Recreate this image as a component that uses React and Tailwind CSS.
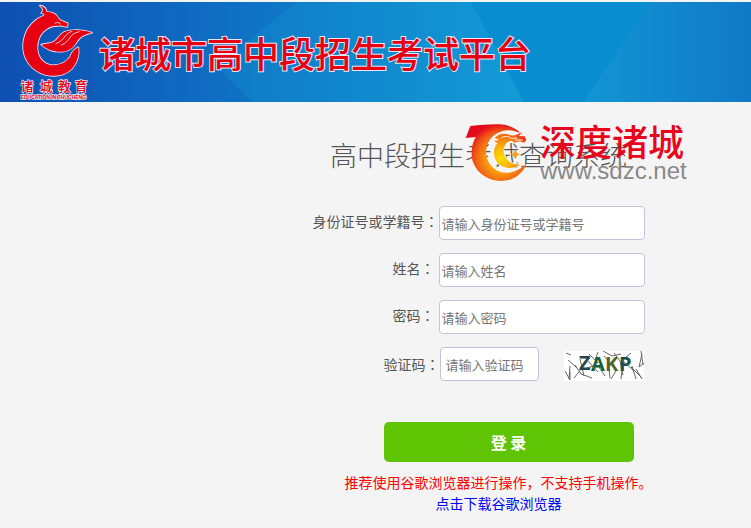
const sans = "font-['Noto_Sans_CJK_SC',sans-serif]";
const field =
  "h-[34px] rounded border border-[#c3c3dc] bg-white text-[13px] text-gray-700 placeholder:text-[#757575] outline-none focus:border-blue-400";

function HeaderBackdrop() {
  return (
    <svg className="absolute inset-0 h-full w-full" viewBox="0 0 751 100" preserveAspectRatio="none" aria-hidden="true">
      <defs>
        <linearGradient id="left" gradientUnits="userSpaceOnUse" x1="0" y1="0" x2="300" y2="0">
          <stop offset="0" stopColor="#0e50b2" />
          <stop offset="1" stopColor="#1079c8" />
        </linearGradient>
        <linearGradient id="middle" gradientUnits="userSpaceOnUse" x1="215" y1="0" x2="520" y2="0">
          <stop offset="0" stopColor="#0f79c5" />
          <stop offset="1" stopColor="#139ad7" />
        </linearGradient>
        <linearGradient id="right" gradientUnits="userSpaceOnUse" x1="585" y1="0" x2="751" y2="0">
          <stop offset="0" stopColor="#1295d4" />
          <stop offset="1" stopColor="#1079c6" />
        </linearGradient>
      </defs>
      <rect width="751" height="100" fill="url(#left)" />
      <path d="M297 0H530V100H252L216 64Z" fill="url(#middle)" />
      <path d="M471 0H652L583 100H524Z" fill="#088dd0" />
      <path d="M650 0H751V100H583Z" fill="url(#right)" />
    </svg>
  );
}

function EducationLogo() {
  return (
    <svg className="h-[97px] w-[75px] shrink-0" viewBox="60 12 225 291" role="img" aria-label="诸城教育">
      <g fill="#e60012" stroke="#f3e9f4" strokeWidth="5" strokeLinejoin="round" className="[paint-order:stroke]">
        <path d="M120 17C132 19 139 26 140 36C156 35 170 43 177 57C184 64 193 64 203 70L202 81C192 80 184 74 174 78C163 76 151 80 140 87C123 98 112 118 112 144C113 174 132 194 158 196C186 195 203 183 211 169C216 155 223 148 235 142C239 165 231 190 216 206C199 223 174 229 150 227C110 223 75 191 70 150C66 108 86 66 129 48C137 44 133 40 124 39L128 34C131 29 127 23 120 17Z" />
        <path d="M276 98C248 88 215 88 193 96C178 103 174 119 160 126C149 132 137 130 124 134C139 148 163 157 188 155C211 152 221 142 230 126C238 112 251 103 276 98Z" />
      </g>
      <g fill="none" stroke="#f7eef4" strokeWidth="2.5" strokeLinecap="round">
        <path d="M168 131C182 126 189 118 196 108C201 101 207 97 216 94" />
        <path d="M184 135C198 130 204 122 211 111C218 101 226 98 238 95" />
        <path d="M165 70C170 66 177 67 181 71" />
      </g>
      <g fill="#e60012" stroke="#f3e9f4" strokeWidth="4" className="[paint-order:stroke]">
        <g className="font-['Noto_Sans_CJK_SC',sans-serif] text-[38px] font-medium">
          <text x="62" y="274">诸</text>
          <text x="119" y="274">城</text>
          <text x="174" y="274">教</text>
          <text x="224" y="274">育</text>
        </g>
        <text x="62" y="298" className="font-['Liberation_Sans',sans-serif] text-[15px] font-bold">EDUCATION IN ZHUCHENG</text>
      </g>
    </svg>
  );
}

function Watermark() {
  return (
    <div className="pointer-events-none absolute -top-5 left-[135px] flex items-start gap-3">
      <svg className="h-[60px] w-[63px] shrink-0" viewBox="9 12 189 180" aria-hidden="true">
        <defs>
          <radialGradient id="flame" gradientUnits="userSpaceOnUse" cx="118" cy="120" r="104">
            <stop offset="0" stopColor="#ffe100" />
            <stop offset="0.4" stopColor="#fba10c" />
            <stop offset="0.75" stopColor="#f05a16" />
            <stop offset="1" stopColor="#e40a1a" />
          </radialGradient>
        </defs>
        <path d="M25 24C60 21 85 18 112 19C143 20 168 33 184 53C167 39 142 34 122 39C86 49 69 79 73 111C78 145 106 167 140 164C161 161 179 151 194 135C184 166 155 189 117 189C68 188 31 152 29 111C29 87 33 70 42 57L11 60Z" fill="url(#flame)" />
        <path
          d="M98 60C108 48 126 44 142 50C154 56 167 50 180 41L171 54L188 55L193 66L186 74L172 70L158 74L149 68C138 70 132 75 128 84C122 96 124 109 132 120C141 133 154 140 174 140C153 156 121 152 104 131C92 113 93 91 106 76L96 69L112 65Z"
          fill="url(#flame)"
          stroke="#fdf6ee"
          strokeWidth="5"
          strokeLinejoin="round"
          className="[paint-order:stroke]"
        />
        <path d="M118 59C128 53 139 55 148 61L165 60M158 66L182 66" fill="none" stroke="#fff2e0" strokeWidth="3" />
        <path d="M160 94L165 105L174 109L165 114L160 124L154 114L146 109L154 105Z" fill="#f9a01a" />
      </svg>
      <div>
        <div className="text-[36px] leading-9 font-medium whitespace-nowrap text-[#e8061d]">深度诸城</div>
        <div className="font-['Liberation_Sans',Arial,sans-serif] text-2xl leading-[26px] font-normal text-[#888]">www.sdzc.net</div>
      </div>
    </div>
  );
}

function Label({ htmlFor, className, children }) {
  return (
    <label htmlFor={htmlFor} className={`shrink-0 text-right text-sm leading-[30px] whitespace-nowrap text-[#555] ${className}`}>
      {children}
      <span className="font-['Noto_Sans_CJK_JP',sans-serif]">：</span>
    </label>
  );
}

function Captcha() {
  return (
    <svg className="mt-1 ml-[25px] h-[30px] w-20 shrink-0" viewBox="0 0 80 30" role="img" aria-label="ZAKP">
      <rect width="80" height="30" fill="#fff" />
      <path
        d="M4 9L13 17M6 15L5 28M1 20L6 29M6 29V21M11 14L17 23L28 27M19 16L10 27M16 8L20 25M25 3L34 12M39 0L48 5L57 3M35 16L41 25M44 10L46 27M50 2L56 10L59 24M59 12L57 28M67 16L78 27M68 15L72 28M72 18L78 28M78 3L75 16L80 12M77 0L79 14M62 6L67 2M29 15L21 18M52 20L47 28M2 2L7 4M34 1L31 9"
        fill="none"
        stroke="#666"
        strokeWidth="1"
      />
      <g className="font-['Noto_Sans',sans-serif] text-[20px] font-bold">
        <text x="15" y="19" fill="#23464b">Z</text>
        <text x="27" y="20" fill="#176039">A</text>
        <text x="41" y="20" fill="#53621a">K</text>
        <text x="55" y="20" fill="#174f4a">P</text>
      </g>
      <path d="M23 9L34 21M40 5L51 18M57 8L70 20" fill="none" stroke="#56705a" strokeWidth="1" />
    </svg>
  );
}

export default function App() {
  return (
    <div className={`min-h-screen bg-[#f4f4f4] ${sans}`}>
      <header className="relative border-t-2 border-[#f4f4f4]">
        <HeaderBackdrop />
        <div className="relative flex h-[100px] items-center gap-1 pl-5">
          <EducationLogo />
          <h1 className="text-[36px] leading-none font-medium whitespace-nowrap text-[#e60012] [-webkit-text-stroke:2px_#e9e6f4] [paint-order:stroke_fill]">
            诸城市高中段招生考试平台
          </h1>
        </div>
      </header>

      <main className="flex flex-col items-center pt-10 pl-[206px]">
        <div className="relative">
          <h2 className="font-['KaiTi','Noto_Sans_CJK_SC',sans-serif] text-[27px] leading-[26px] font-light whitespace-nowrap text-[#555]">
            高中段招生考试查询系统
          </h2>
          <Watermark />
        </div>

        <form className="mt-[38px] flex w-[332px] flex-col" onSubmit={(e) => e.preventDefault()}>
          <div className="flex flex-col gap-[13px]">
            <div className="flex">
              <Label htmlFor="idno" className="w-[126px]">身份证号或学籍号</Label>
              <input id="idno" type="text" placeholder="请输入身份证号或学籍号" className={`w-[206px] px-0.5 ${field}`} />
            </div>
            <div className="flex">
              <Label htmlFor="name" className="w-[126px] pr-1">姓名</Label>
              <input id="name" type="text" placeholder="请输入姓名" className={`w-[206px] px-0.5 ${field}`} />
            </div>
            <div className="flex">
              <Label htmlFor="password" className="w-[126px] pr-1">密码</Label>
              <input id="password" type="password" placeholder="请输入密码" className={`w-[206px] px-0.5 ${field}`} />
            </div>
            <div className="flex">
              <Label htmlFor="code" className="w-[127px] pt-0.5">验证码</Label>
              <input id="code" type="text" placeholder="请输入验证码" className={`w-[99px] px-[5px] ${field}`} />
              <Captcha />
            </div>
          </div>
          <div className="mt-[41px] pl-[71px]">
            <button type="submit" className="h-10 w-[250px] rounded-[5px] bg-[#5ec404] text-base font-bold text-white">
              登 录
            </button>
          </div>
        </form>

        <div className="mt-[10px] pl-10 text-center text-sm leading-[21px] whitespace-nowrap">
          <p className="text-[#f00]">推荐使用谷歌浏览器进行操作，不支持手机操作。</p>
          <a href="#download" className="text-[#00f]">点击下载谷歌浏览器</a>
        </div>
      </main>
    </div>
  );
}
